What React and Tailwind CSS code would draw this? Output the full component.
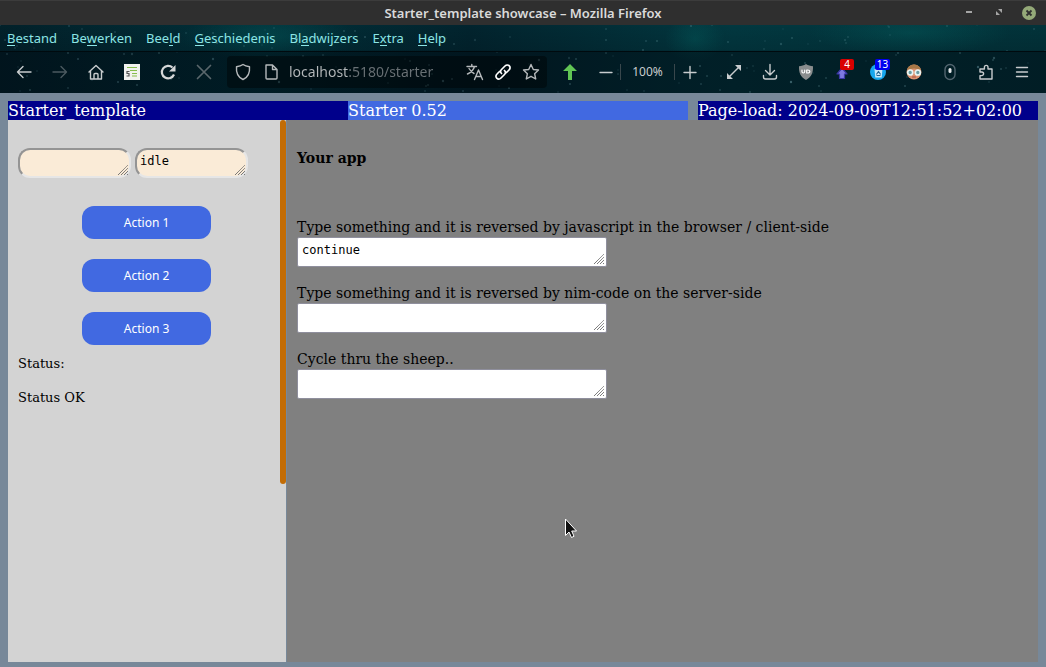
import React from "react";

const stars = Array.from({ length: 150 }, (_, i) => ({
  x: (i * 397 + ((i * i * 13) % 211)) % 1046,
  y: (i * 29 + ((i * i * 7) % 31)) % 68,
  o: 0.12 + ((i * 17) % 10) / 30,
  r: i % 11 === 0 ? 1.2 : 0.8,
}));

function StarField() {
  return (
    <svg className="absolute inset-0 h-full w-full" viewBox="0 0 1046 68" preserveAspectRatio="xMidYMid slice" aria-hidden="true">
      <defs>
        <linearGradient id="sky" x1="0" x2="1" y1="0" y2="0">
          <stop offset="0" stopColor="#02212a" />
          <stop offset=".25" stopColor="#013039" />
          <stop offset=".45" stopColor="#02242e" />
          <stop offset=".7" stopColor="#023840" />
          <stop offset="1" stopColor="#02333a" />
        </linearGradient>
        <linearGradient id="shade" x1="0" x2="0" y1="0" y2="1">
          <stop offset="0" stopColor="#000810" stopOpacity="0" />
          <stop offset=".37" stopColor="#000810" stopOpacity=".15" />
          <stop offset=".4" stopColor="#000810" stopOpacity=".5" />
          <stop offset="1" stopColor="#000810" stopOpacity=".5" />
        </linearGradient>
        <radialGradient id="glow">
          <stop offset="0" stopColor="#046060" stopOpacity=".45" />
          <stop offset="1" stopColor="#046060" stopOpacity="0" />
        </radialGradient>
      </defs>
      <rect width="1046" height="68" fill="url(#sky)" />
      <ellipse cx="270" cy="12" rx="90" ry="24" fill="url(#glow)" />
      <ellipse cx="695" cy="14" rx="30" ry="24" fill="url(#glow)" />
      <ellipse cx="910" cy="8" rx="100" ry="22" fill="url(#glow)" />
      <rect width="1046" height="68" fill="url(#shade)" />
      {stars.map((s, i) => (
        <circle key={i} cx={s.x} cy={s.y} r={s.r} fill="#8fc0cc" opacity={s.o} />
      ))}
      <path d="M0 26.5H1046" stroke="#000a0e" />
    </svg>
  );
}

function Icon({ children, className = "" }) {
  return (
    <svg viewBox="0 0 20 20" className={"h-5 w-5 shrink-0 " + className} fill="none" stroke="currentColor" strokeWidth="1.4" strokeLinecap="round" strokeLinejoin="round" aria-hidden="true">
      {children}
    </svg>
  );
}

function ToolButton({ label, children, className = "" }) {
  return (
    <button aria-label={label} className={"relative flex h-9 w-9 shrink-0 items-center justify-center text-[#c8ccce] " + className}>
      {children}
    </button>
  );
}

function Grip() {
  return (
    <svg viewBox="0 0 12 12" className="pointer-events-none absolute right-[2px] bottom-[2px] h-3 w-3" fill="none" stroke="#666" aria-hidden="true">
      <path d="M1 11L11 1M4 11L11 4M7 11L11 7M10 11L11 10" strokeDasharray="1.2 .3" />
    </svg>
  );
}

const menus = [
  ["", "B", "estand"],
  ["Be", "w", "erken"],
  ["Bee", "l", "d"],
  ["", "G", "eschiedenis"],
  ["Bl", "a", "dwijzers"],
  ["E", "x", "tra"],
  ["", "H", "elp"],
];

function SmallBox({ label, value }) {
  return (
    <div className="relative h-[30px] w-[113px]">
      <textarea aria-label={label} defaultValue={value} rows={1} className="block h-full w-full resize-none overflow-hidden rounded-xl border-2 border-t-[#949494] border-r-[#e6e6e6] border-b-[#e6e6e6] border-l-[#949494] bg-[#faebd7] px-[3px] py-1 font-['DejaVu_Sans_Mono',monospace] text-[12px] leading-[15px] text-black outline-none" />
      <Grip />
    </div>
  );
}

function Field({ id, label, value }) {
  return (
    <div className="mb-4">
      <label htmlFor={id} className="block text-[14px] leading-5">{label}</label>
      <div className="relative h-[30px] w-[310px] max-w-full">
        <textarea id={id} defaultValue={value} rows={1} className="block h-full w-full resize-none overflow-hidden rounded-[2px] border border-[#8f8f9d] bg-white px-1 py-[5px] font-['DejaVu_Sans_Mono',monospace] text-[12px] leading-[15px] text-black outline-none" />
        <Grip />
      </div>
    </div>
  );
}

function Browser() {
  return (
    <header className="font-['Noto_Sans',sans-serif]">
      <div className="grid h-[25px] grid-cols-[1fr_auto_1fr] items-center border-t border-[#3c3c3c] bg-[#2f2f2f] px-[10px]">
        <h1 className="col-start-2 text-[13px] leading-5 font-semibold text-[#dadada]">Starter_template showcase – Mozilla Firefox</h1>
        <div className="flex items-center justify-end gap-4">
          <button aria-label="Minimaliseren">
            <svg viewBox="0 0 14 14" className="h-[14px] w-[14px]"><path d="M4 6H10" stroke="#a5a5a5" strokeWidth="2" /></svg>
          </button>
          <button aria-label="Herstellen">
            <svg viewBox="0 0 14 14" className="h-[14px] w-[14px]" fill="#a5a5a5"><path d="M6 3H10V7ZM4 5V9H8Z" /></svg>
          </button>
          <button aria-label="Sluiten">
            <svg viewBox="0 0 14 14" className="h-[14px] w-[14px]"><circle cx="7" cy="7" r="7" fill="#94a978" /><path d="M4.5 4.5L9.5 9.5M9.5 4.5L4.5 9.5" stroke="#2f2f2f" strokeWidth="1.8" /></svg>
          </button>
        </div>
      </div>
      <div className="relative bg-[#02212a]">
        <StarField />
        <nav className="relative flex h-[26px] items-center gap-[14px] px-[7px] text-[13px] text-[#8ce5e5]">
          {menus.map(([a, b, c]) => (
            <button key={a + b + c} className="leading-4">
              {a}<span className="inline-block h-4 border-b border-[#8ce5e5]">{b}</span>{c}
            </button>
          ))}
        </nav>
        <div className="relative flex h-[42px] items-center px-[6px]">
          <ToolButton label="Vorige"><Icon><path d="M17 10H3.500M9 4.500L3.500 10L9 15.500" /></Icon></ToolButton>
          <ToolButton label="Volgende"><Icon className="text-[#4b5a60]"><path d="M3 10H16.500M11 4.500L16.500 10L11 15.500" /></Icon></ToolButton>
          <ToolButton label="Startpagina"><Icon><path d="M3 10L10 3.500L17 10M4.500 9V17H15.500V9M8 17V12.500Q8 11.500 9 11.500H11Q12 11.500 12 12.500V17" /></Icon></ToolButton>
          <ToolButton label="Stylus">
            <svg viewBox="0 0 16 16" className="h-4 w-4"><rect width="16" height="16" fill="#f2f2ef" /><path d="M3 3.500H13M6 6.500H13M8 9.500H13M8 12H13" stroke="#87bd4c" strokeWidth="1.200" /><path d="M5.500 7.500H3V9.500H5V12H2.500" fill="none" stroke="#555" strokeWidth="1.200" /></svg>
          </ToolButton>
          <ToolButton label="Vernieuwen"><Icon className="text-[#d5d7d8]"><path d="M16 12.500A6.300 6.300 0 1 1 14.500 5.500" strokeWidth="2.200" strokeLinecap="butt" /><path d="M17.500 3V9.500H11Z" fill="currentColor" stroke="none" /></Icon></ToolButton>
          <ToolButton label="Stoppen"><Icon className="text-[#5a676c]"><path d="M3.500 3.500L16.500 16.500M16.500 3.500L3.500 16.500" strokeWidth="1.700" /></Icon></ToolButton>
          <div className="mx-[5px] flex h-8 min-w-0 flex-1 items-center rounded bg-black/40 px-[6px] text-[#b5b9bb]">
            <Icon><path d="M10 2.500C8 4 5.500 4.500 3.500 4.700C3 10 4.500 15 10 17.500C15.500 15 17 10 16.500 4.700C14.500 4.500 12 4 10 2.500Z" /></Icon>
            <Icon className="ml-2"><path d="M5 3H11.500L16 7.500V16Q16 17 15 17H6Q5 17 5 16ZM11.500 3V7.500H16" /></Icon>
            <input aria-label="Adres" defaultValue="localhost:5180/starter" className="ml-2 min-w-0 flex-1 bg-[linear-gradient(90deg,#b5b9bb_59px,#697175_59px)] bg-clip-text text-[14px] leading-5 text-transparent outline-none" />
            <button aria-label="Vertalen" className="mr-2"><Icon><path d="M2 4.500H11.500M6.800 2.500V4.500M9.500 4.500C8.500 8 6 10.500 2.500 12M4 6.500C5.500 9 7 10.500 9 11.500M9.500 17.500L13.500 8L17.500 17.500M11 14.500H16" /></Icon></button>
            <button aria-label="Koppeling" className="mr-2 text-white"><Icon><path d="M8.500 11.500C7.300 10.300 7.300 8.700 8.500 7.500L12 4C13.300 2.700 15.200 2.700 16.300 3.800C17.400 4.900 17.300 6.800 16 8L13.500 10.500M11.500 8.500C12.700 9.700 12.700 11.300 11.500 12.500L8 16C6.700 17.300 4.800 17.300 3.700 16.200C2.600 15.100 2.700 13.200 4 12L6.500 9.500" strokeWidth="1.700" /></Icon></button>
            <button aria-label="Bladwijzer toevoegen"><Icon><path d="M10 2.500L12.300 7.500L17.500 8L13.600 11.700L14.700 17L10 14.300L5.300 17L6.400 11.700L2.500 8L7.700 7.500Z" /></Icon></button>
          </div>
          <ToolButton label="Omhoog"><Icon><path d="M10 2L17 9H12V18H8V9H3Z" fill="#61c554" stroke="none" /></Icon></ToolButton>
          <ToolButton label="Uitzoomen" className="-mr-1"><Icon><path d="M4 10.500H16" /></Icon></ToolButton>
          <button className="h-4 w-[55px] shrink-0 border-x border-[#39474c] text-center text-[12px] leading-[14px] text-[#c8ccce]">100%</button>
          <ToolButton label="Inzoomen" className="-ml-1"><Icon><path d="M5 10.500H17M11 4.500V16.500" /></Icon></ToolButton>
          <ToolButton label="Volledig scherm" className="ml-[9px]"><Icon><path d="M5 15L15 5" /><path d="M11 3H17V9ZM3 11V17H9Z" fill="currentColor" stroke="none" /></Icon></ToolButton>
          <ToolButton label="Downloads"><Icon><path d="M10 2.500V13M5.500 8.500L10 13L14.500 8.500M3.500 13.500V15Q3.500 17 5.500 17H14.500Q16.500 17 16.500 15V13.500" /></Icon></ToolButton>
          <ToolButton label="uBlock Origin"><Icon><path d="M10 2C8 3.500 5.500 4 3 4.300C2.800 11 4.500 15 10 18C15.500 15 17.200 11 17 4.300C14.500 4 12 3.500 10 2Z" fill="#8a8d8e" stroke="none" /><path d="M6 8V9.800Q6 11 7.300 11T8.700 9.800V8M10.700 8V11H11.500Q13.800 11 13.800 9.500T11.500 8Z" stroke="#fff" strokeWidth="1.200" /></Icon></ToolButton>
          <ToolButton label="Meldingen">
            <Icon><path d="M10 6L15 12H12.500V16.500H7.500V12H5Z" fill="#7d7ae0" stroke="#3a37a5" strokeWidth="1.200" /></Icon>
            <span className="absolute top-[5px] right-[6px] h-[11px] w-[14px] rounded-[2px] bg-[#d90000] text-center text-[10px] leading-[11px] text-white">4</span>
          </ToolButton>
          <ToolButton label="Cookies wissen">
            <Icon><circle cx="10" cy="10" r="8" fill="#16a7ed" stroke="none" /><path d="M6.500 7H14.500L13.700 15.500H7.300Z" fill="#c8eafa" stroke="none" /><path d="M8.700 12L10.500 9.500L12.300 12M12 13.500H9" stroke="#236691" strokeWidth="1.200" /></Icon>
            <span className="absolute top-[5px] right-[6px] h-[11px] w-[15px] rounded-[2px] bg-[#0000f0] text-center text-[10px] leading-[11px] text-white">13</span>
          </ToolButton>
          <ToolButton label="Privacy"><Icon><circle cx="10" cy="10" r="7.500" fill="#dc9370" stroke="none" /><path d="M3 8Q4 3 10 2.500Q16 3 17 8Q10 5 3 8Z" fill="#a77847" stroke="none" /><circle cx="6.200" cy="10.500" r="2.500" fill="#6b9da2" stroke="#e8f5f3" strokeWidth="1.700" /><circle cx="13.800" cy="10.500" r="2.500" fill="#6b9da2" stroke="#e8f5f3" strokeWidth="1.700" /><path d="M8.500 15H11.500" stroke="#a24f41" strokeWidth="1" /></Icon></ToolButton>
          <ToolButton label="Muisgebaren"><Icon className="text-[#52656f]"><rect x="5" y="2.500" width="10" height="15" rx="5" /><rect x="8.500" y="6" width="3" height="5" rx="1.500" fill="#e5e8ea" stroke="none" /></Icon></ToolButton>
          <ToolButton label="Extensies"><Icon><path d="M4 17H16V7H12V5.200A1.800 1.800 0 0 0 8.400 5.200V7H4V10H5.800A1.800 1.800 0 0 1 5.800 13.600H4Z" /></Icon></ToolButton>
          <ToolButton label="Menu"><Icon><path d="M4.500 5.500H15.500M4.500 10H15.500M4.500 14.500H15.500" /></Icon></ToolButton>
        </div>
      </div>
    </header>
  );
}

export default function App() {
  return (
    <div className="relative flex min-h-screen flex-col bg-[#778899] font-['DejaVu_Serif',serif] text-black">
      <Browser />
      <div className="flex flex-1 flex-col px-2 pt-2 pb-[5px]">
        <div className="flex text-[16px] leading-[19px] whitespace-nowrap text-white">
          <div className="flex-1 bg-[#00008b]">Starter_template</div>
          <div className="flex-1 bg-[#4169e1]">Starter 0.52</div>
          <div className="ml-[10px] flex-1 bg-[#00008b]">Page-load: 2024-09-09T12:51:52+02:00</div>
        </div>
        <div className="flex flex-1 gap-px">
          <aside className="flex w-[27%] shrink-0 items-stretch bg-[#d3d3d3]">
            <div className="min-w-0 flex-1 pt-7 pr-[5px] pl-[10px] text-[13px] leading-[17px]">
              <div className="flex gap-1">
                <SmallBox label="Invoer" value="" />
                <SmallBox label="Toestand" value="idle" />
              </div>
              <div className="mt-7 flex flex-col items-center gap-5">
                {["Action 1", "Action 2", "Action 3"].map((t) => (
                  <button key={t} className="h-[33px] w-[129px] rounded-xl bg-[#4169e1] font-['Noto_Sans',sans-serif] text-[12px] text-white">{t}</button>
                ))}
              </div>
              <p className="mt-[10px]">Status:</p>
              <p className="mt-[17px]">Status OK</p>
            </div>
            <div className="h-[364px] w-[6px] rounded-[3px] bg-[#c26c05]" />
          </aside>
          <main className="min-w-0 flex-1 bg-[#808080] px-[10px] pt-7">
            <h2 className="mb-[49px] text-[14px] leading-5 font-bold">Your app</h2>
            <Field id="client" label="Type something and it is reversed by javascript in the browser / client-side" value="continue" />
            <Field id="server" label="Type something and it is reversed by nim-code on the server-side" value="" />
            <Field id="sheep" label="Cycle thru the sheep.." value="" />
          </main>
        </div>
      </div>
      <svg viewBox="0 0 14 21" className="pointer-events-none absolute top-[518px] left-[564px] h-[21px] w-[14px]" aria-hidden="true">
        <path d="M1.500 1V17.500L5 14L7.500 19.500L10 18.300L7.700 13H12.500Z" fill="#111" stroke="#fff" />
      </svg>
    </div>
  );
}
